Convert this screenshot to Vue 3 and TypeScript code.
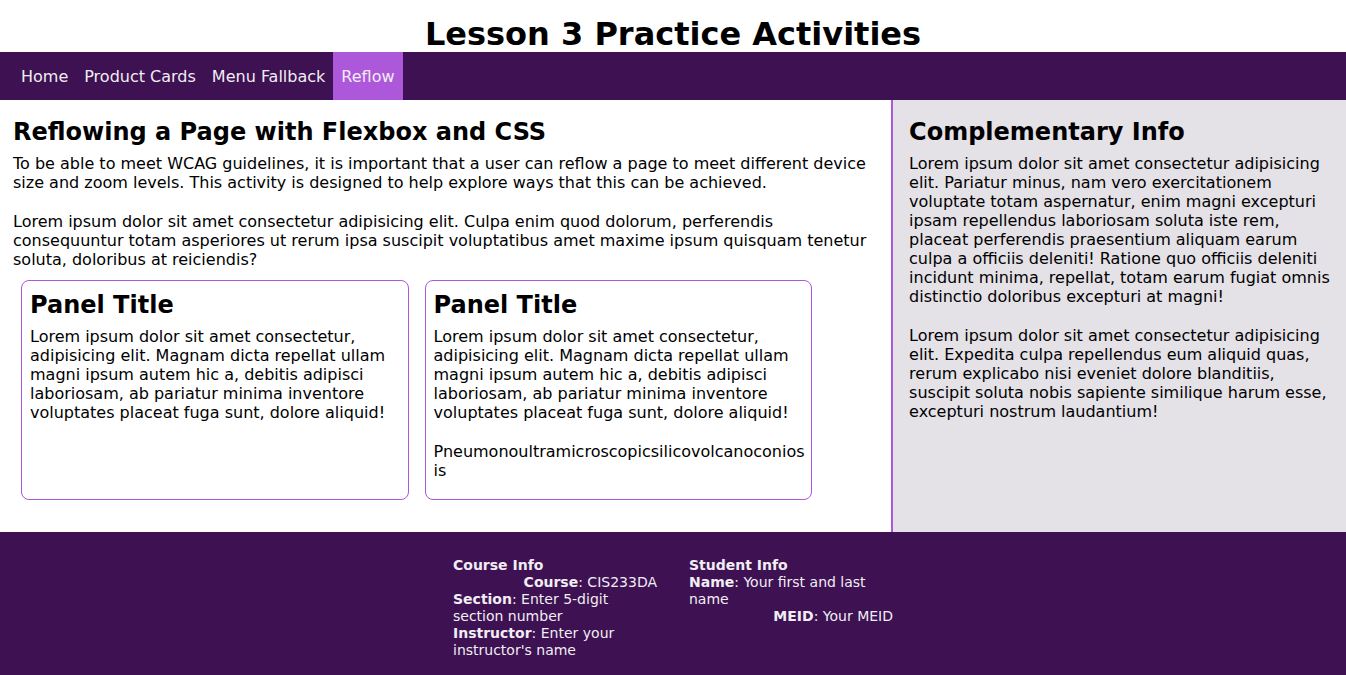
<script setup lang="ts">
interface NavItem { label: string; active: boolean }
interface Entry { term: string; value: string }
interface InfoGroup { title: string; entries: Entry[] }

const navItems: NavItem[] = [
  { label: 'Home', active: false },
  { label: 'Product Cards', active: false },
  { label: 'Menu Fallback', active: false },
  { label: 'Reflow', active: true },
]

const panelText = 'Lorem ipsum dolor sit amet consectetur, adipisicing elit. Magnam dicta repellat ullam magni ipsum autem hic a, debitis adipisci laboriosam, ab pariatur minima inventore voluptates placeat fuga sunt, dolore aliquid!'
const panels: string[][] = [
  [panelText],
  [panelText, 'Pneumonoultramicroscopicsilicovolcanoconiosis'],
]

const groups: InfoGroup[] = [
  {
    title: 'Course Info',
    entries: [
      { term: 'Course', value: 'CIS233DA' },
      { term: 'Section', value: 'Enter 5-digit section number' },
      { term: 'Instructor', value: "Enter your instructor's name" },
    ],
  },
  {
    title: 'Student Info',
    entries: [
      { term: 'Name', value: 'Your first and last name' },
      { term: 'MEID', value: 'Your MEID' },
    ],
  },
]
</script>

<template>
  <div class="page">
    <header>
      <h1>Lesson 3 Practice Activities</h1>
    </header>
    <nav>
      <ul>
        <li v-for="item in navItems" :key="item.label">
          <a href="#" :class="{ active: item.active }" :aria-current="item.active ? 'page' : undefined">{{ item.label }}</a>
        </li>
      </ul>
    </nav>
    <div class="content">
      <main>
        <h2>Reflowing a Page with Flexbox and CSS</h2>
        <p>To be able to meet WCAG guidelines, it is important that a user can reflow a page to meet different device size and zoom levels. This activity is designed to help explore ways that this can be achieved.</p>
        <p>Lorem ipsum dolor sit amet consectetur adipisicing elit. Culpa enim quod dolorum, perferendis consequuntur totam asperiores ut rerum ipsa suscipit voluptatibus amet maxime ipsum quisquam tenetur soluta, doloribus at reiciendis?</p>
        <div class="panels">
          <section v-for="(panel, i) in panels" :key="i" class="panel">
            <h2>Panel Title</h2>
            <p v-for="text in panel" :key="text">{{ text }}</p>
          </section>
        </div>
      </main>
      <aside>
        <h2>Complementary Info</h2>
        <p>Lorem ipsum dolor sit amet consectetur adipisicing elit. Pariatur minus, nam vero exercitationem voluptate totam aspernatur, enim magni excepturi ipsam repellendus laboriosam soluta iste rem, placeat perferendis praesentium aliquam earum culpa a officiis deleniti! Ratione quo officiis deleniti incidunt minima, repellat, totam earum fugiat omnis distinctio doloribus excepturi at magni!</p>
        <p>Lorem ipsum dolor sit amet consectetur adipisicing elit. Expedita culpa repellendus eum aliquid quas, rerum explicabo nisi eveniet dolore blanditiis, suscipit soluta nobis sapiente similique harum esse, excepturi nostrum laudantium!</p>
      </aside>
    </div>
    <footer>
      <section v-for="group in groups" :key="group.title" class="group">
        <h3>{{ group.title }}</h3>
        <p v-for="entry in group.entries" :key="entry.term"><strong>{{ entry.term }}</strong>: {{ entry.value }}</p>
      </section>
    </footer>
  </div>
</template>

<style>
body {
  margin: 0;
}
</style>

<style scoped>
.page {
  display: flex;
  flex-direction: column;
  min-height: 100vh;
  font-family: Verdana, "DejaVu Sans", sans-serif;
  font-size: 16px;
  line-height: 19px;
  color: #000;
  background: #fff;
}
h1, h2, h3, p, ul {
  margin: 0;
}
h1 {
  padding-top: 16px;
  font-size: 32px;
  line-height: 36px;
  text-align: center;
}
h2 {
  margin-bottom: 6px;
  font-size: 24px;
  line-height: 32px;
}
nav {
  background: #3d1152;
}
ul {
  display: flex;
  padding: 0 13px;
  list-style: none;
}
nav a {
  display: block;
  padding: 15px 8px 14px;
  color: #f1edf3;
  text-decoration: none;
}
nav a.active {
  background: #ad57db;
}
.content {
  display: flex;
  flex: 1;
}
main {
  flex: 1;
  min-width: 0;
  padding: 16px 13px 24px;
}
main > p + p, aside p + p, .panel p + p {
  margin-top: 20px;
}
aside {
  box-sizing: border-box;
  width: 33.8%;
  padding: 16px 13px 24px 16px;
  border-left: 2px solid #ad57db;
  background: #e4e1e7;
}
.panels {
  display: flex;
  gap: 16px;
  padding: 11px 66px 8px 8px;
}
.panel {
  flex: 1;
  min-width: 0;
  padding: 8px 6px 19px 8px;
  border: 1px solid #ad57db;
  border-radius: 8px;
  overflow-wrap: anywhere;
}
footer {
  display: flex;
  justify-content: center;
  gap: 32px;
  padding: 25px 0 16px;
  font-size: 14px;
  line-height: 17px;
  color: #f1edf3;
  background: #3d1152;
}
.group {
  display: flex;
  flex-direction: column;
  align-items: flex-end;
  width: 204px;
}
h3 {
  align-self: flex-start;
  font-size: 14px;
  line-height: 17px;
}
</style>
